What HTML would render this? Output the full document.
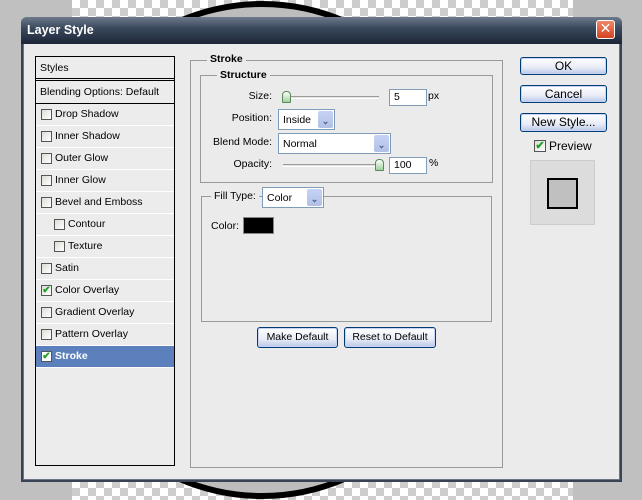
<!DOCTYPE html>
<html><head><style>
*{margin:0;padding:0;box-sizing:border-box}
body{width:642px;height:500px;position:relative;overflow:hidden;background:#c0c0c0;font-family:"Liberation Sans",Tahoma,sans-serif;font-size:10.5px;color:#000}
.a{position:absolute}
.chk{left:72px;top:0;width:501px;height:500px;background-color:#fff;background-image:linear-gradient(45deg,#cdcdcd 25%,transparent 25%,transparent 75%,#cdcdcd 75%),linear-gradient(45deg,#cdcdcd 25%,transparent 25%,transparent 75%,#cdcdcd 75%);background-size:16px 16px;background-position:0 0,8px 8px}
.dlg{left:21px;top:17px;width:601px;height:465px;background:#ebebeb;border:2px solid #3a4356;border-top:none;border-radius:6px 6px 0 0;box-shadow:inset 0 0 0 1px #6c7486}
.tb{left:21px;top:17px;width:601px;height:27px;border-radius:6px 6px 0 0;background:linear-gradient(#6d7a8a,#3b4a5e 40%,#1d2538);color:#fff;font-weight:bold;font-size:12.5px;padding:6px 0 0 6px;font-family:"Liberation Sans",sans-serif}
.x{left:596px;top:20px;width:19px;height:19px;border-radius:3px;background:linear-gradient(#f0866a,#d24420);border:1px solid #fff;color:#fff;font:bold 14px/16px "DejaVu Sans",sans-serif;text-align:center}
.list{left:35px;top:56px;width:140px;height:410px;border:1px solid #000;background:#ececec}
.row{position:absolute;left:0;width:138px;height:22px;border-bottom:1px solid #fff;line-height:21px;padding-left:19px}
.cb{position:absolute;left:5px;top:5px;width:11px;height:11px;border:1px solid #555;background:linear-gradient(135deg,#dcdcd6,#fff)}
.ck{color:#21a121;font-size:10px;line-height:9px;text-align:center;font-weight:bold}
.grp{border:1px solid #999}
.lbl{background:#ebebeb;padding:0 3px;font-weight:bold}
.in{background:#fff;border:1px solid #7f9db9;padding-left:4px;line-height:15px}
.sel{background:#fff;border:1px solid #7f9db9;padding-left:4px}
.sel i{position:absolute;right:1px;top:1px;bottom:1px;width:15px;background:linear-gradient(#c6d3f7,#b0c0e6);border-radius:2px;font-style:normal;color:#4d6185;text-align:center;font-size:9px;font-weight:bold}
.sl{height:3px;border-top:1px solid #9a9a9a;border-bottom:1px solid #fff;background:#e4e4e0}
.th{width:9px;height:12px;background:linear-gradient(#fff,#9ed29e);border:1px solid #5a8a5a;border-radius:4px 4px 1px 1px}
.btn{border:1px solid #003c74;border-radius:3px;background:linear-gradient(#fff,#e8ecf6 60%,#b8c6e8);text-align:center;font-size:12px;box-shadow:inset 0 0 0 1px #c6d3f7}
</style></head><body>
<div class="a chk"></div>
<svg class="a" style="left:0;top:0" width="642" height="500"><ellipse cx="262" cy="250" rx="225" ry="246" fill="#bdbdbd" stroke="#000" stroke-width="6"/></svg>
<div class="a dlg"></div>
<div class="a tb">Layer Style</div>
<div class="a x">✕</div>

<div class="a list">
 <div class="row" style="top:0;height:24px;padding-left:4px;line-height:22px;border-bottom:3px double #000">Styles</div>
 <div class="row" style="top:25px;padding-left:4px;border-bottom:1px solid #000">Blending Options: Default</div>
 <div class="row" style="top:47px"><span class="cb"></span>Drop Shadow</div>
 <div class="row" style="top:69px"><span class="cb"></span>Inner Shadow</div>
 <div class="row" style="top:91px"><span class="cb"></span>Outer Glow</div>
 <div class="row" style="top:113px"><span class="cb"></span>Inner Glow</div>
 <div class="row" style="top:135px"><span class="cb"></span>Bevel and Emboss</div>
 <div class="row" style="top:157px;padding-left:32px"><span class="cb" style="left:18px"></span>Contour</div>
 <div class="row" style="top:179px;padding-left:32px"><span class="cb" style="left:18px"></span>Texture</div>
 <div class="row" style="top:201px"><span class="cb"></span>Satin</div>
 <div class="row" style="top:223px"><span class="cb ck">✔</span>Color Overlay</div>
 <div class="row" style="top:245px"><span class="cb"></span>Gradient Overlay</div>
 <div class="row" style="top:267px"><span class="cb"></span>Pattern Overlay</div>
 <div class="row" style="top:289px;background:#5c80bb;color:#fff;font-weight:bold"><span class="cb ck" style="background:#fff">✔</span>Stroke</div>
</div>

<div class="a grp" style="left:190px;top:60px;width:313px;height:408px"></div>
<div class="a lbl" style="left:207px;top:53px">Stroke</div>
<div class="a grp" style="left:200px;top:75px;width:293px;height:108px"></div>
<div class="a lbl" style="left:217px;top:69px">Structure</div>

<div class="a" style="left:200px;top:90px;width:72px;text-align:right">Size:</div>
<div class="a sl" style="left:283px;top:96px;width:96px"></div>
<div class="a th" style="left:282px;top:91px"></div>
<div class="a in" style="left:389px;top:89px;width:38px;height:17px">5</div>
<div class="a" style="left:428px;top:90px">px</div>

<div class="a" style="left:200px;top:112px;width:72px;text-align:right">Position:</div>
<div class="a sel" style="left:278px;top:109px;width:57px;height:21px;line-height:20px">Inside<i>⌄</i></div>

<div class="a" style="left:200px;top:136px;width:72px;text-align:right">Blend Mode:</div>
<div class="a sel" style="left:278px;top:133px;width:113px;height:21px;line-height:20px">Normal<i>⌄</i></div>

<div class="a" style="left:200px;top:158px;width:72px;text-align:right">Opacity:</div>
<div class="a sl" style="left:283px;top:164px;width:96px"></div>
<div class="a th" style="left:375px;top:159px"></div>
<div class="a in" style="left:389px;top:157px;width:38px;height:17px">100</div>
<div class="a" style="left:429px;top:157px">%</div>

<div class="a grp" style="left:201px;top:196px;width:291px;height:126px"></div>
<div class="a" style="left:211px;top:190px;background:#ebebeb;padding:0 3px">Fill Type:</div>
<div class="a sel" style="left:262px;top:187px;width:62px;height:21px;line-height:20px">Color<i>⌄</i></div>
<div class="a" style="left:211px;top:220px">Color:</div>
<div class="a" style="left:243px;top:217px;width:31px;height:17px;background:#000;border:1px solid #888"></div>

<div class="a btn" style="left:257px;top:327px;width:81px;height:21px;line-height:19px;font-size:10.5px">Make Default</div>
<div class="a btn" style="left:344px;top:327px;width:92px;height:21px;line-height:19px;font-size:10.5px">Reset to Default</div>

<div class="a btn" style="left:520px;top:57px;width:87px;height:18px;line-height:16px">OK</div>
<div class="a btn" style="left:520px;top:85px;width:87px;height:18px;line-height:16px">Cancel</div>
<div class="a btn" style="left:520px;top:113px;width:87px;height:19px;line-height:17px">New Style...</div>
<div class="a cb ck" style="left:534px;top:140px;width:12px;height:12px;position:absolute;font-size:11px;line-height:10px">✔</div>
<div class="a" style="left:549px;top:139px;font-size:12px">Preview</div>
<div class="a" style="left:530px;top:160px;width:65px;height:65px;background:#dcdcdc;border:1px solid #ccc"></div>
<div class="a" style="left:547px;top:178px;width:31px;height:31px;background:#c0c0c0;border:2px solid #000"></div>
</body></html>
